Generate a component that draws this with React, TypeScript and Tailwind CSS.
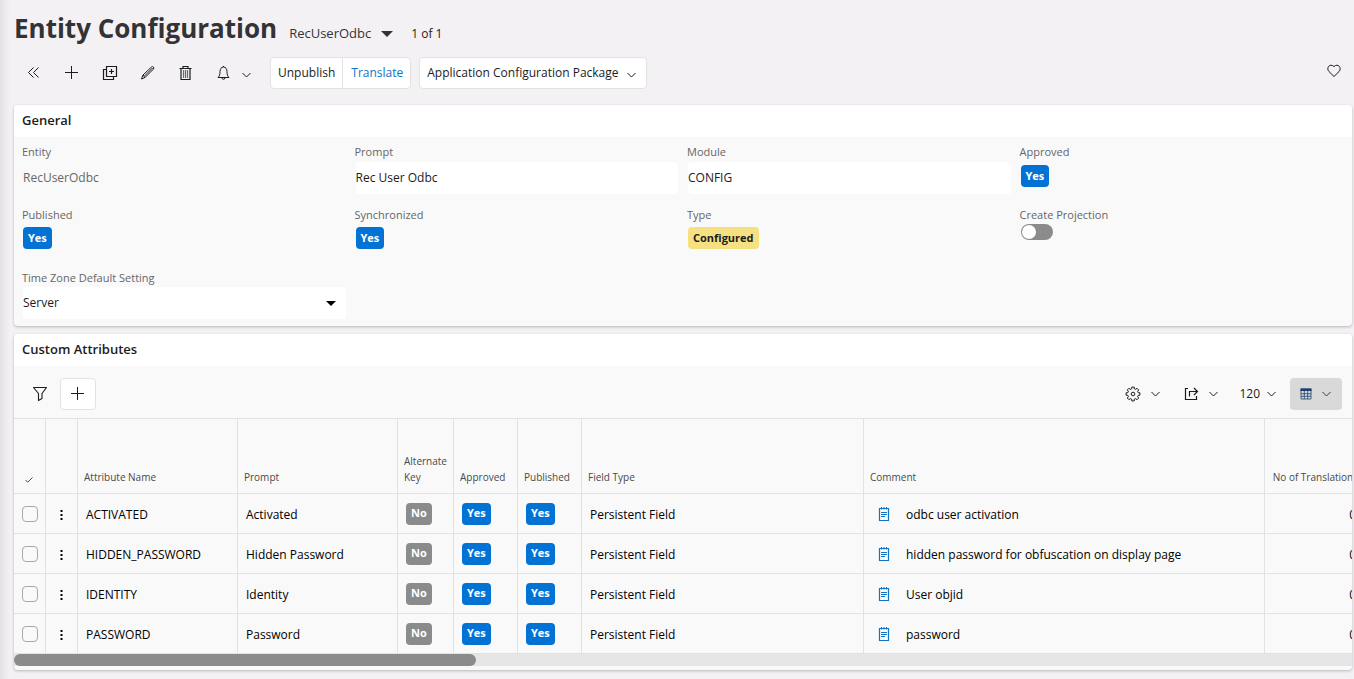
import { useState } from 'react'
import type { ReactNode } from 'react'
import clsx from 'clsx'

interface Attribute {
  name: string
  prompt: string
  fieldType: string
  comment: string
  translations: number
}

const attributes: Attribute[] = [
  { name: 'ACTIVATED', prompt: 'Activated', fieldType: 'Persistent Field', comment: 'odbc user activation', translations: 0 },
  {
    name: 'HIDDEN_PASSWORD',
    prompt: 'Hidden Password',
    fieldType: 'Persistent Field',
    comment: 'hidden password for obfuscation on display page',
    translations: 0,
  },
  { name: 'IDENTITY', prompt: 'Identity', fieldType: 'Persistent Field', comment: 'User objid', translations: 0 },
  { name: 'PASSWORD', prompt: 'Password', fieldType: 'Persistent Field', comment: 'password', translations: 0 },
]

const badgeTones = {
  blue: 'bg-[#0273d4] text-white',
  gray: 'bg-[#8b8b8b] text-white',
  yellow: 'bg-[#f5e182] text-[#1c1c1c]',
}

function Badge({ tone, children }: { tone: keyof typeof badgeTones; children: ReactNode }) {
  return (
    <span
      className={clsx(
        'inline-flex h-[22px] items-center rounded px-[5px] text-[11px] font-bold',
        badgeTones[tone],
      )}
    >
      {children}
    </span>
  )
}

function Icon({ className, children }: { className?: string; children: ReactNode }) {
  return (
    <svg
      width="16"
      height="16"
      viewBox="0 0 16 16"
      fill="none"
      stroke="currentColor"
      className={clsx('shrink-0', className)}
      aria-hidden="true"
    >
      {children}
    </svg>
  )
}

function Chevron() {
  return (
    <svg width="9" height="6" viewBox="0 0 9 6" fill="none" stroke="currentColor" className="shrink-0" aria-hidden="true">
      <path d="M.5 1l4 4 4-4" />
    </svg>
  )
}

function PlusIcon() {
  return (
    <Icon>
      <path d="M7.500 1v13M1 7.500h13" />
    </Icon>
  )
}

// Cog outline: eight teeth around a small hub
function GearIcon() {
  return (
    <Icon>
      <path
        d="M6.700 2.800L6.800 1.100H9.200L9.300 2.800L10.760 3.400L12.030 2.270L13.730 3.970L12.600 5.240L13.200 6.700L14.900 6.800V9.200L13.200 9.300L12.600 10.760L13.730 12.030L12.030 13.730L10.760 12.600L9.300 13.200L9.200 14.900H6.800L6.700 13.200L5.240 12.600L3.970 13.730L2.270 12.030L3.400 10.760L2.800 9.300L1.100 9.200V6.800L2.800 6.700L3.400 5.240L2.270 3.970L3.970 2.270L5.240 3.400z"
        strokeLinejoin="round"
      />
      <circle cx="8" cy="8" r="1.800" />
    </Icon>
  )
}

function NoteIcon() {
  return (
    <Icon className="text-[#1273c4]">
      <path d="M3.500 2.500h9v12h-9z" strokeWidth="1.200" />
      <path d="M5.500 1v2.500M8 1v2.500M10.500 1v2.500" />
      <path d="M5 6.500h6M5 8.500h6M5 10.500h4" />
    </Icon>
  )
}

function ToolButton({ label, children }: { label: string; children: ReactNode }) {
  return (
    <button type="button" aria-label={label} className="flex h-8 w-[38px] items-center justify-center pl-0.5">
      {children}
    </button>
  )
}

function Field({ label, htmlFor, children }: { label: string; htmlFor?: string; children: ReactNode }) {
  return (
    <div className="h-[63px] pt-[7px] pr-[9px]">
      <label htmlFor={htmlFor} className="block h-[17px] text-[11px] leading-4 text-[#666]">
        {label}
      </label>
      <div className="pl-px">{children}</div>
    </div>
  )
}

function Card({ title, children }: { title: string; children: ReactNode }) {
  return (
    <section className="overflow-hidden rounded bg-[#f9f9f9] shadow-[0_1px_3px_rgba(0,0,0,0.25)]">
      <h2 className="flex h-8 items-center bg-white px-2 text-[13px] font-semibold text-[#1c1c1c]">{title}</h2>
      {children}
    </section>
  )
}

function GeneralCard() {
  const [prompt, setPrompt] = useState('Rec User Odbc')
  const [module, setModule] = useState('CONFIG')
  const [projection, setProjection] = useState(false)

  return (
    <Card title="General">
      <div className="grid grid-cols-4 pl-2">
        <Field label="Entity" htmlFor="entity">
          <input
            id="entity"
            readOnly
            value="RecUserOdbc"
            className="mt-px block h-8 w-full bg-transparent pb-0.5 text-[12px] text-[#666] outline-none"
          />
        </Field>
        <Field label="Prompt" htmlFor="prompt">
          <input
            id="prompt"
            value={prompt}
            onChange={(e) => setPrompt(e.target.value)}
            className="mt-px block h-8 w-full rounded-sm bg-white pb-0.5 text-[12px] text-[#1c1c1c] outline-none"
          />
        </Field>
        <Field label="Module" htmlFor="module">
          <input
            id="module"
            value={module}
            onChange={(e) => setModule(e.target.value)}
            className="mt-px block h-8 w-full rounded-sm bg-white pb-0.5 text-[12px] text-[#1c1c1c] outline-none"
          />
        </Field>
        <Field label="Approved">
          <div className="flex pt-1">
            <Badge tone="blue">Yes</Badge>
          </div>
        </Field>
        <Field label="Published">
          <div className="flex pt-[3px]">
            <Badge tone="blue">Yes</Badge>
          </div>
        </Field>
        <Field label="Synchronized">
          <div className="flex pt-[3px]">
            <Badge tone="blue">Yes</Badge>
          </div>
        </Field>
        <Field label="Type">
          <div className="flex pt-[3px]">
            <Badge tone="yellow">Configured</Badge>
          </div>
        </Field>
        <Field label="Create Projection" htmlFor="projection">
          <input
            id="projection"
            type="checkbox"
            role="switch"
            checked={projection}
            onChange={(e) => setProjection(e.target.checked)}
            className="flex h-4 w-8 appearance-none items-center rounded-full bg-[#8b8b8b] px-px before:size-3.5 before:rounded-full before:bg-white checked:justify-end checked:bg-[#0273d4]"
          />
        </Field>
        <Field label="Time Zone Default Setting" htmlFor="timezone">
          <div className="relative">
            <select
              id="timezone"
              defaultValue="Server"
              className="block h-8 w-full appearance-none rounded-sm bg-white text-[12px] text-[#1c1c1c] outline-none"
            >
              <option>Server</option>
              <option>User</option>
            </select>
            <svg
              width="10"
              height="5"
              viewBox="0 0 10 5"
              className="pointer-events-none absolute top-3.5 right-2.5"
              aria-hidden="true"
            >
              <path d="M0 0h10L5 5z" />
            </svg>
          </div>
        </Field>
      </div>
    </Card>
  )
}

function AttributesCard() {
  const th = 'border-r border-b border-[#e2e2e2] px-1.5 pb-2 text-left align-bottom font-normal'
  const td = 'border-r border-b border-[#e2e2e2] px-2 whitespace-nowrap'
  const textCell = clsx(td, 'pt-0.5')

  return (
    <Card title="Custom Attributes">
      <div className="flex h-[53px] items-center border-b border-[#e2e2e2] pt-1 pr-2.5 pl-2 text-[#1c1c1c]">
        <button type="button" aria-label="Filter" className="flex h-8 w-9 items-center justify-center">
          <Icon>
            <path d="M1.500 1.500h13L10 7.500v5L6.500 14.500v-7z" strokeWidth="1.100" strokeLinejoin="round" />
          </Icon>
        </button>
        <button
          type="button"
          aria-label="Add attribute"
          className="ml-0.5 flex h-8 w-9 items-center justify-center rounded border border-[#e2e2e2] bg-white"
        >
          <PlusIcon />
        </button>
        <div className="ml-auto flex items-center text-[12px]">
          <button type="button" aria-label="Settings" className="mr-[23px] flex items-center gap-2.5">
            <GearIcon />
            <Chevron />
          </button>
          <button type="button" aria-label="Export" className="mr-[21px] flex items-center gap-2.5">
            <Icon>
              <path d="M5 2.500H2.500v11h11V10" strokeWidth="1.200" />
              <path d="M6.500 10.500v-5H14M11 2l3.500 3.500L11 9" strokeWidth="1.200" />
            </Icon>
            <Chevron />
          </button>
          <button type="button" aria-label="Rows per page" className="mr-3.5 flex items-center gap-[7px]">
            120
            <Chevron />
          </button>
          <button
            type="button"
            aria-label="Table view"
            className="flex h-8 w-[52px] items-center gap-2 rounded bg-[#d9d9d9] pl-2 text-[#1f3f6e]"
          >
            <Icon>
              <path d="M2.500 2.500h11V5h-11z" fill="currentColor" stroke="none" />
              <path d="M3 3h10v10H3zM3 7.700h10M3 10.300h10M6.300 5v8M9.700 5v8" strokeWidth=".8" />
            </Icon>
            <Chevron />
          </button>
        </div>
      </div>

      <div className="overflow-hidden">
        <table className="w-[1351px] table-fixed border-separate border-spacing-0">
          <colgroup>
            <col className="w-8" />
            <col className="w-8" />
            <col className="w-40" />
            <col className="w-40" />
            <col className="w-14" />
            <col className="w-16" />
            <col className="w-16" />
            <col className="w-[282px]" />
            <col className="w-[401px]" />
            <col />
          </colgroup>
          <thead>
            <tr className="h-[75px] text-[10px] leading-4 text-[#4a4a4a]">
              <th className={th}>
                <svg width="8" height="6" viewBox="0 0 8 6" fill="none" stroke="currentColor" className="mb-0.5 ml-[5px]" aria-label="Selected">
                  <path d="M.5 3l2.200 2.200L7.500.5" />
                </svg>
              </th>
              <th className={th} aria-label="Actions" />
              <th className={th}>Attribute Name</th>
              <th className={th}>Prompt</th>
              <th className={th}>Alternate Key</th>
              <th className={th}>Approved</th>
              <th className={th}>Published</th>
              <th className={th}>Field Type</th>
              <th className={th}>Comment</th>
              <th className={clsx(th, 'text-right whitespace-nowrap')}>No of Translations</th>
            </tr>
          </thead>
          <tbody className="text-[12px] text-black">
            {attributes.map((attr) => (
              <tr key={attr.name} className="h-10">
                <td className={td}>
                  <input
                    type="checkbox"
                    aria-label={`Select ${attr.name}`}
                    className="block size-4 appearance-none rounded border border-[#a8a8a8] checked:bg-[#0273d4]"
                  />
                </td>
                <td className={td}>
                  <button type="button" aria-label={`Actions for ${attr.name}`} className="block">
                    <Icon>
                      <path d="M6.500 4h2v2h-2zM6.500 8h2v2h-2zM6.500 12h2v2h-2z" fill="currentColor" stroke="none" />
                    </Icon>
                  </button>
                </td>
                <td className={textCell}>{attr.name}</td>
                <td className={textCell}>{attr.prompt}</td>
                <td className={td}>
                  <div className="flex">
                    <Badge tone="gray">No</Badge>
                  </div>
                </td>
                <td className={td}>
                  <div className="flex">
                    <Badge tone="blue">Yes</Badge>
                  </div>
                </td>
                <td className={td}>
                  <div className="flex">
                    <Badge tone="blue">Yes</Badge>
                  </div>
                </td>
                <td className={textCell}>{attr.fieldType}</td>
                <td className={td}>
                  <div className="flex items-center gap-3.5 pl-1">
                    <NoteIcon />
                    <span className="pt-0.5">{attr.comment}</span>
                  </div>
                </td>
                <td className={clsx(textCell, 'text-right')}>{attr.translations}</td>
              </tr>
            ))}
          </tbody>
        </table>
      </div>
      <div className="mb-1 h-3 bg-[#e6e6e6]">
        <div className="h-3 w-[34.5%] rounded-full bg-[#8b8b8b]" />
      </div>
    </Card>
  )
}

export default function App() {
  return (
    <div className="min-h-screen bg-[#f3f1f4] bg-[linear-gradient(to_right,#e4e2e5,#f3f1f4_10px)] pr-0.5 pb-2 pl-3.5 font-['Open_Sans',sans-serif] text-[#1c1c1c]">
      <header>
        <div className="flex h-[57px] items-baseline pt-2.5">
          <h1 className="text-[26px] leading-9 font-bold text-[#333335]">Entity Configuration</h1>
          <button type="button" className="ml-3 flex items-center gap-2.5 text-[13px] font-medium text-[#333335]">
            RecUserOdbc
            <svg width="12" height="6" viewBox="0 0 12 6" fill="currentColor" aria-hidden="true">
              <path d="M0 0h12L6 6z" />
            </svg>
          </button>
          <span className="ml-[18px] text-[12px]">1 of 1</span>
        </div>

        <div className="flex h-12 items-start">
          <ToolButton label="Collapse">
            <Icon>
              <path d="M7.500 2.500l-5 5 5 5M12.500 2.500l-5 5 5 5" />
            </Icon>
          </ToolButton>
          <ToolButton label="New">
            <PlusIcon />
          </ToolButton>
          <ToolButton label="Duplicate">
            <Icon>
              <path d="M4.500 1.500h10v10h-10z" strokeWidth="1.200" />
              <path d="M4 4.500H1.500v10h10V12M9.500 4v5M7 6.500h5" strokeWidth="1.200" />
            </Icon>
          </ToolButton>
          <ToolButton label="Edit">
            <Icon>
              <path d="M1.500 14l1.500-4L11.500 2c1.500-1 3 .5 2 2L5 12.500zM3 10l2 2.500M4.500 11l8-8" />
            </Icon>
          </ToolButton>
          <ToolButton label="Delete">
            <Icon>
              <path d="M1.500 3.500h12M5 3.500v-2h5v2M3 3.500v11h9v-11" strokeWidth="1.200" />
              <path d="M5.500 5v8M7.500 5v8M9.500 5v8" stroke="#5f6f73" strokeWidth="1.200" />
            </Icon>
          </ToolButton>
          <ToolButton label="Notifications">
            <Icon>
              <path d="M2 12.500c1.500-1.500 2-3 2-6 0-2.500 1.300-4.500 3.500-4.500S11 4 11 6.500c0 3 .5 4.500 2 6zM6 13c0 1.800 3 1.800 3 0M7.500 1v1" />
            </Icon>
          </ToolButton>
          <button type="button" aria-label="Notification options" className="mt-0.5 flex h-8 items-center">
            <Chevron />
          </button>
          <div className="ml-[19px] flex h-8 divide-x divide-[#e2e2e2] rounded border border-[#e2e2e2] bg-white text-[12px]">
            <button type="button" className="px-[7px]">
              Unpublish
            </button>
            <button type="button" className="pr-[7px] pl-2 text-[#1273c4]">
              Translate
            </button>
          </div>
          <button
            type="button"
            className="ml-2 flex h-8 items-center gap-2 rounded border border-[#e2e2e2] bg-white pr-2.5 pl-[7px] text-[12px]"
          >
            Application Configuration Package
            <span className="pt-1">
              <Chevron />
            </span>
          </button>
          <button type="button" aria-label="Add to favorites" className="mr-2.5 ml-auto flex h-7 items-center">
            <Icon>
              <path d="M8 13.500L3 8.600C-.3 5.200 4 -.4 8 3.600c4-4 8.300 1.600 5 5z" />
            </Icon>
          </button>
        </div>
      </header>

      <main className="flex flex-col gap-2">
        <GeneralCard />
        <AttributesCard />
      </main>
    </div>
  )
}
